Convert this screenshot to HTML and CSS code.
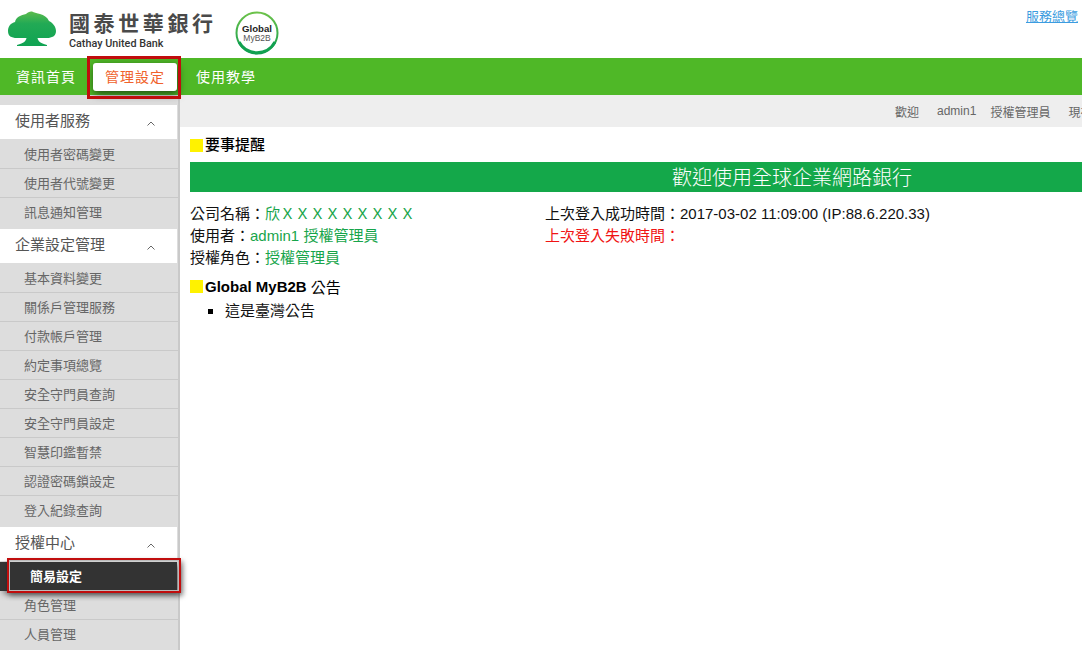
FILE: index.html
```html
<!DOCTYPE html>
<html lang="zh-Hant">
<head>
<meta charset="utf-8">
<title>國泰世華銀行</title>
<link rel="stylesheet" href="styles.css">
</head>
<body>
<header class="header">
  <svg class="tree" viewBox="8 11 49 36" width="49" height="36" aria-hidden="true">
    <defs>
      <linearGradient id="leaf" x1="0" y1="0" x2="0" y2="1">
        <stop offset="0" stop-color="#5cbb4d"/>
        <stop offset="0.35" stop-color="#22aa55"/>
        <stop offset="1" stop-color="#0fa352"/>
      </linearGradient>
      <linearGradient id="ring" x1="0" y1="0" x2="0" y2="1">
        <stop offset="0" stop-color="#6cc24a"/>
        <stop offset="1" stop-color="#0f9d4f"/>
      </linearGradient>
    </defs>
    <path fill="url(#leaf)" d="M8 31C8 26 11 23 15 22C16 17 21 15 26 14C28 12 31 11 33 12C35 13 37 13 40 14C44 15 47 17 49 21C53 23 56 27 56 31C56 36 52 38 47 38L37.500 38C38 41 40 43 47 45L47 46L17 46L17 45C24 43 26 41 26.500 38L17 38C11 38 8 36 8 31Z"/>
  </svg>
  <div class="brand">
    <div class="brand-zh">國泰世華銀行</div>
    <div class="brand-en">Cathay United Bank</div>
  </div>
  <svg class="badge" viewBox="0 0 46 46" width="46" height="46" role="img">
    <circle cx="23" cy="23" r="20.500" fill="#fff" stroke="url(#ring)" stroke-width="2"/>
    <path d="M5 32A20.500 20.500 0 0 0 41 32" fill="none" stroke="#12a150" stroke-width="3"/>
    <text class="badge-a" x="23" y="22" text-anchor="middle">Global</text>
    <text class="badge-b" x="23" y="31" text-anchor="middle">MyB2B</text>
  </svg>
  <a class="overview" href="#">服務總覽</a>
</header>

<nav class="nav">
  <a class="nav-link" href="#">資訊首頁</a>
  <a class="nav-link nav-active" href="#">管理設定</a>
  <a class="nav-link" href="#">使用教學</a>
</nav>

<div class="body">
  <aside class="side">
    <section class="group">
      <h3 class="group-head">使用者服務<svg class="chev" viewBox="0 0 8 5" width="8" height="5"><path d="M.5 4.500L4 1L7.500 4.500" fill="none" stroke="#666" stroke-width="1"/></svg></h3>
      <a class="item" href="#">使用者密碼變更</a>
      <a class="item" href="#">使用者代號變更</a>
      <a class="item" href="#">訊息通知管理</a>
    </section>
    <section class="group">
      <h3 class="group-head">企業設定管理<svg class="chev" viewBox="0 0 8 5" width="8" height="5"><path d="M.5 4.500L4 1L7.500 4.500" fill="none" stroke="#666" stroke-width="1"/></svg></h3>
      <a class="item" href="#">基本資料變更</a>
      <a class="item" href="#">關係戶管理服務</a>
      <a class="item" href="#">付款帳戶管理</a>
      <a class="item" href="#">約定事項總覽</a>
      <a class="item" href="#">安全守門員查詢</a>
      <a class="item" href="#">安全守門員設定</a>
      <a class="item" href="#">智慧印鑑暫禁</a>
      <a class="item" href="#">認證密碼鎖設定</a>
      <a class="item" href="#">登入紀錄查詢</a>
    </section>
    <section class="group">
      <h3 class="group-head">授權中心<svg class="chev" viewBox="0 0 8 5" width="8" height="5"><path d="M.5 4.500L4 1L7.500 4.500" fill="none" stroke="#666" stroke-width="1"/></svg></h3>
      <a class="item item-active" href="#">簡易設定</a>
      <a class="item" href="#">角色管理</a>
      <a class="item" href="#">人員管理</a>
    </section>
  </aside>

  <main class="main">
    <div class="topbar">
      <span class="tb-welcome">歡迎</span>
      <span class="tb-user">admin1</span>
      <span class="tb-role">授權管理員</span>
      <span class="tb-now">現在時間</span>
    </div>
    <div class="content">
      <h2 class="title"><span class="mark"></span><span class="title-zh">要事提醒</span></h2>
      <div class="banner">歡迎使用全球企業網路銀行</div>
      <div class="info">
        <div class="info-col">
          <div class="line">公司名稱：<span class="green">欣ＸＸＸＸＸＸＸＸＸ</span></div>
          <div class="line">使用者：<span class="green">admin1 授權管理員</span></div>
          <div class="line">授權角色：<span class="green">授權管理員</span></div>
        </div>
        <div class="info-col">
          <div class="line">上次登入成功時間：2017-03-02 11:09:00 (IP:88.6.220.33)</div>
          <div class="line red">上次登入失敗時間：</div>
        </div>
      </div>
      <h2 class="title title-notice"><span class="mark"></span><b class="title-en">Global MyB2B</b> <span class="title-plain">公告</span></h2>
      <ul class="notes">
        <li class="note">這是臺灣公告</li>
      </ul>
    </div>
  </main>
</div>
</body>
</html>
```
FILE: styles.css
```css
* { box-sizing: border-box; }
html, body { margin: 0; height: 650px; overflow: hidden; background: #fff; }
body {
  font-family: "Liberation Sans", "Noto Sans CJK TC", sans-serif;
  font-size: 15px;
  color: #111;
}
a { text-decoration: none; }

.header { display: flex; align-items: flex-start; height: 58px; padding-left: 8px; }
.tree { margin-top: 11px; flex: none; }
.brand { margin-left: 12px; margin-top: 9px; color: #444; width: 166px; flex: none; }
.brand-zh { font-size: 21px; line-height: 27px; letter-spacing: 3.6px; font-weight: 700; font-family: "Noto Sans CJK TC", sans-serif; color: #4a4a4a; white-space: nowrap; }
.brand-en { font-family: Roboto, sans-serif; font-size: 10.8px; line-height: 14px; margin-top: 1px; font-weight: 500; color: #333; }
.badge { margin-top: 10px; margin-left: -1px; flex: none; }
.badge-a { font: 700 9.6px "Liberation Sans", sans-serif; fill: #222; }
.badge-b { font: 8.5px "Liberation Sans", sans-serif; fill: #555; }
.overview { margin-left: auto; margin-right: 4px; margin-top: 8px; font-size: 13px; line-height: 18px; color: #3c9ce0; text-decoration: underline; }

.nav { display: flex; align-items: center; height: 37px; padding-left: 16px; background: #4fb827; position: relative; z-index: 2; }
.nav-link { color: #fff; font-size: 14px; letter-spacing: 1px; line-height: 28px; }
.nav-active {
  position: relative;
  margin: 0 19px 0 17px;
  padding: 0 12px;
  width: 84px;
  height: 28px;
  background: #fff;
  color: #f0622c;
  border-radius: 3px;
  box-shadow: 1px 3px 9px rgba(0, 0, 0, .6);
}
.nav-active::after {
  content: "";
  position: absolute;
  left: -6px; right: -4px; top: -7px; bottom: -8px;
  border: 3px solid #c00d0d;
}

.body { display: flex; height: 555px; }
.side { width: 180px; flex: none; background: #ddd; border-right: 2px solid #c9c9c9; padding-top: 10px; }
.group { margin-bottom: 2px; }
.group-head {
  display: flex; align-items: center; justify-content: space-between;
  height: 34px; margin: 0 1px 1px 0; padding: 0 22px 5px 15px;
  background: #fff; font-size: 15px; font-weight: 400; color: #555;
}
.chev { display: block; margin-top: 7px; }
.item {
  display: block; height: 29px; line-height: 30px; padding-left: 24px;
  font-size: 13px; color: #666; border-bottom: 1px solid #c9c9c9;
}
.group .item:last-child { border-bottom: 0; }
.item-active {
  position: relative; z-index: 1;
  background: #333; color: #fff; font-weight: 700;
  padding-left: 30px; margin-right: 1px; border-bottom: 0;
  box-shadow: 3px 3px 6px rgba(0, 0, 0, .45);
}
.item-active::after {
  content: "";
  position: absolute;
  left: 7px; right: -4px; top: -4px; bottom: -2px;
  border: 2px solid #c00d0d;
  box-shadow: inset 0 0 0 1px #bbb, 2px 3px 5px rgba(0, 0, 0, .4);
}

.main { flex: none; width: 1300px; }
.topbar { display: flex; align-items: center; height: 32px; background: #eee; padding-left: 715px; font-size: 12px; color: #666; white-space: nowrap; }
.tb-user { margin-left: 18px; }
.tb-role { margin-left: 14px; }
.tb-now { margin-left: 18px; }
.content { padding: 9px 0 0 10px; }
.title { display: flex; align-items: center; height: 18px; margin: 0; font-size: 15px; font-weight: 400; white-space: pre; color: #000; }
.mark { width: 13px; height: 13px; background: #fff200; margin-right: 2px; flex: none; }
.title-zh { font-weight: 500; margin-bottom: 3px; }
.title-en { font-weight: 700; }
.title-plain { margin-left: 4px; }
.banner { width: 1204px; height: 30px; margin-top: 8px; line-height: 30px; text-align: center; background: #14a84a; color: #fff; font-size: 20px; font-family: "Noto Sans CJK TC", sans-serif; font-weight: 300; }
.info { display: flex; margin-top: 11px; }
.info-col { width: 355px; flex: none; white-space: nowrap; }
.line { height: 22px; line-height: 22px; }
.green { color: #17a54b; }
.red { color: #f01414; }
.title-notice { margin-top: 8px; }
.notes { list-style: none; margin: 5px 0 0; padding-left: 18px; line-height: 22px; }
.note { display: flex; align-items: center; }
.note::before { content: ""; width: 5px; height: 5px; margin-right: 12px; background: #000; flex: none; }
```
